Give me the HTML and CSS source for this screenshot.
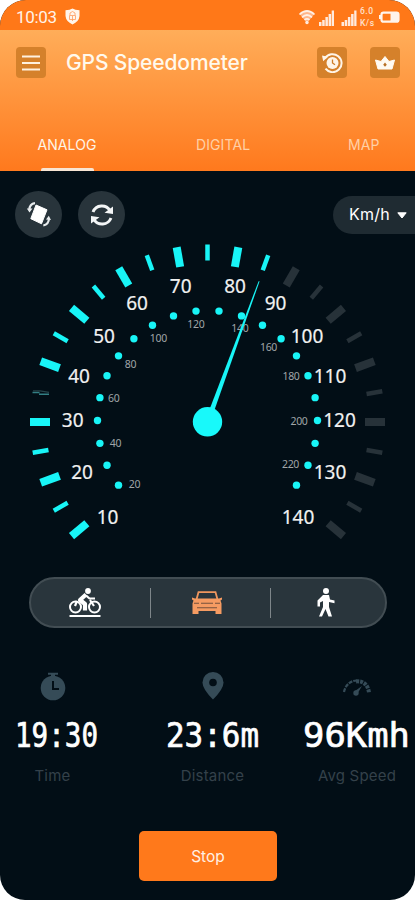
FILE: index.html
```html
<!DOCTYPE html>
<html lang="en">
<head>
<meta charset="utf-8">
<meta name="viewport" content="width=device-width, initial-scale=1">
<title>GPS Speedometer</title>
<link rel="stylesheet" href="styles.css">
</head>
<body>
<main class="phone">
  <div class="status">
    <span class="clock">10:03</span>
    <svg class="shield" width="15" height="17" viewBox="0 0 15 17"><path d="M.5 2.2Q5 2 7.500 .4Q10 2 14.500 2.200V8Q14 13.500 7.500 16.500Q1 13.500 .5 8Z" fill="#fff5eb"/><path d="M5 7V5q2.500-3 5 0v2M4.500 7.500h6v4h-6zM7.500 8v5" fill="none" stroke="#ff9a5c" stroke-width=".8"/></svg>
    <svg class="signals" width="104" height="24" viewBox="0 0 104 24">
      <path d="M2 9.500Q9 3 16 9.500L9 18z" fill="#ffb58a"/>
      <g fill="none" stroke="#fff0e6" stroke-width="1.700"><path d="M1.500 9.500Q9 2.500 16.500 9.500"/><path d="M4 12.300Q9 7.700 14 12.300"/><path d="M6.500 14.800Q9 12.800 11.500 14.800"/></g>
      <circle cx="9" cy="17.500" r="1.700" fill="#ffe9dc"/>
      <g fill="#ffeade"><path d="M21 17h2.500v4H21zM24.200 15h2.500v6h-2.500zM27.400 12h2.500v9h-2.500zM30.600 9h2.500v12h-2.500zM33.700 5.500h2.300V21h-2.300z"/><path d="M43.500 17H46v4h-2.500zM46.700 15h2.500v6h-2.500zM49.900 12h2.500v9h-2.500zM53.100 9h2.500v12h-2.500zM56.200 5.500h2.300V21h-2.300z"/></g>
      <text class="rate" x="62" y="9" textLength="13">6.0</text><text class="rate" x="62" y="20.500" textLength="14">K/s</text>
      <rect x="83.500" y="7.700" width="17" height="9" rx="2" fill="none" stroke="#fff4ec" stroke-width="2.200"/><path d="M92.500 8h8v8.500h-8zM81 10h2v4h-2z" fill="#fff4ec"/>
    </svg>
  </div>
  <header class="header">
    <div class="titlebar">
      <span class="square"><svg width="18" height="16" viewBox="0 0 18 16"><path d="M0 1.500h18M0 8h18M0 14.500h18" stroke="#fff1df" stroke-width="2.200"/></svg></span>
      <h1 class="title">GPS Speedometer</h1>
      <span class="square"><svg width="22" height="20" viewBox="0 0 22 20"><circle cx="11.500" cy="10" r="6" fill="#fff5e8"/><path d="M4 5.300A9 9 0 1 1 4.500 15.700" fill="none" stroke="#fff5e8" stroke-width="2"/><path d="M1 2.500l6 1.200-4.800 4.500z" fill="#fff5e8"/><path d="M11.500 6.500V10l2.500 1.700" fill="none" stroke="#cf7d26" stroke-width="1.300"/></svg></span>
      <span class="square crown"><svg width="20" height="14" viewBox="0 0 20 14"><path d="M.5 4L6 5.500 10 .5l4 5 5.500-1.500L17 13H3z" fill="#fffaf2" stroke="#fffaf2" stroke-linejoin="round"/><path d="M10 6.500l1.800 2.200-1.800 2.100-1.800-2.100z" fill="#b77025"/></svg></span>
    </div>
    <nav class="tabs">
      <span class="tab active">ANALOG</span><span class="tab digital">DIGITAL</span><span class="tab map">MAP</span>
    </nav>
  </header>
  <section class="tools">
    <span class="round"><svg width="26" height="27" viewBox="0 0 26 27"><path d="M10 4L21 8.800 15.500 22.800 4.800 17.700z" fill="#fff" stroke="#fff" stroke-linejoin="round"/><g fill="none" stroke="#e8ecee" stroke-width="2.200"><path d="M3.300 9Q3.500 3 9 2.200"/><path d="M23 17Q22.800 23.500 17.300 24.500"/></g><path d="M.8 7.500h5.700L3.500 11.500zM20 18.500l2.800-3.800 2.200 4.300z" fill="#e8ecee"/></svg></span>
    <span class="round"><svg width="26" height="24" viewBox="0 0 26 24"><g fill="none" stroke="#f3f5f6" stroke-width="2.900"><path d="M4 9C7 1.500 17 1 21 7.500"/><path d="M22 15C19 22.500 9 23 5 16.500"/></g><path d="M24 3.500V11l-8.500-1.300zM2 20.500V13l8.500 1.300z" fill="#f3f5f6"/></svg></span>
    <span class="unit"><span class="unit-name">Km/h</span><svg width="10" height="7" viewBox="0 0 10 7"><path d="M.8 .8h8.400L5 6z" fill="#fff" stroke="#fff" stroke-linejoin="round"/></svg></span>
  </section>
  <svg class="gauge" width="415" height="310" viewBox="0 240 415 310">
    <g id="ticks"></g>
    <path d="M32.500 392.500h7M39 394.200h10" stroke="#327f84" stroke-width="1.600"/><path d="M33 390.800h7l9 1.500" fill="none" stroke="#27444b" stroke-width="1.200"/>
    <path d="M335 311l5-4 1 4 3 1-5 3z" fill="#273239"/>
    <g id="dots" fill="#18f5f7"></g>
    <g class="minor-labels">
      <text x="134.500" y="487.500">20</text><text x="115.500" y="446.600">40</text><text x="113.800" y="402">60</text><text x="130.500" y="368">80</text><text x="158.300" y="342">100</text><text x="195.800" y="327.500">120</text><text x="239.800" y="332">140</text><text x="268.500" y="351">160</text><text x="291" y="379.500">180</text><text x="299" y="424.500">200</text><text x="290.500" y="467.500">220</text>
    </g>
    <g class="major-labels">
      <text x="107.500" y="524">10</text><text x="82" y="478.500">20</text><text x="72.700" y="427">30</text><text x="79" y="382.500">40</text><text x="104" y="342.500">50</text><text x="137" y="309.500">60</text><text x="180.700" y="292.500">70</text><text x="235" y="292.500">80</text><text x="275.500" y="309.500">90</text><text x="307" y="342.500">100</text><text x="330" y="382.500">110</text><text x="339.500" y="427">120</text><text x="330" y="478.500">130</text><text x="298" y="524">140</text>
    </g>
    <path d="M205 421.300L258.600 281.200h1L210 422.700z" fill="#18f5f7"/>
    <circle cx="207.500" cy="421.800" r="14.700" fill="#18f9fa"/>
  </svg>
  <section class="modes">
    <span class="mode bike"><svg width="32" height="30" viewBox="0 0 32 30"><g fill="none" stroke="#fff" stroke-width="2"><circle cx="6.500" cy="19" r="5.500"/><circle cx="25.500" cy="19" r="5.500"/><path d="M.5 28h31"/></g><circle cx="19" cy="3" r="2.900" fill="#fff"/><path d="M17 6.500l-6 5.500 5 4v6.500" fill="none" stroke="#fff" stroke-width="4.200" stroke-linejoin="round"/><path d="M17 7.500l3.500 3H26M8 13l-2 5M21 12l4 6" fill="none" stroke="#fff" stroke-width="2.200"/></svg></span>
    <span class="mode car"><svg width="30" height="24" viewBox="0 0 30 24"><path d="M4.500 8.500L6.500 1.200h17l2 7.300" fill="none" stroke="#ef965e" stroke-width="1.800"/><path d="M0 6.500l3 1h24l3-1v2l-1.500 1 1 3V23h-6v-3h-17v3h-6V12.500l1-3L0 8.500z" fill="#f59b62"/><path d="M2 12.200h5M23 12.200h5M9 12.200h12M5 16.800h20" stroke="#75523d" stroke-width="1.100"/></svg></span>
    <span class="mode walk"><svg width="20" height="30" viewBox="0 0 20 30"><circle cx="10" cy="3" r="3" fill="#fff"/><path d="M7 7h6l1 4.500 4.500 1v2.700L13 14v5l3 9.500h-3.500L9.500 21 6 28.500H3L7 19v-6l-3 1.500v4H1.500V12.500z" fill="#fff"/></svg></span>
  </section>
  <section class="stats">
    <div class="stat time">
      <svg class="stat-icon" width="28" height="30" viewBox="0 0 28 30"><circle cx="14" cy="17" r="12.300" fill="#354b57"/><path d="M9 1.800h10v2H9zM12 3h4v3h-4z" fill="#354b57"/><path d="M14 10v8h6" fill="none" stroke="#020e16" stroke-width="2"/></svg>
      <svg class="reading" width="84" height="44" viewBox="0 0 84 44"><text x="0" y="34" textLength="83" lengthAdjust="spacingAndGlyphs">19:30</text></svg>
      <span class="caption">Time</span>
    </div>
    <div class="stat distance">
      <svg class="stat-icon" width="22" height="30" viewBox="0 0 22 30"><path d="M11 28.500Q.5 18 .5 11.500a10.500 10.500 0 0 1 21 0Q21.500 18 11 28.500z" fill="#354b57"/><circle cx="11" cy="11.500" r="3.800" fill="#020e16"/></svg>
      <svg class="reading" width="94" height="44" viewBox="0 0 94 44"><text x="0" y="34" textLength="93" lengthAdjust="spacingAndGlyphs">23:6m</text></svg>
      <span class="caption">Distance</span>
    </div>
    <div class="stat speed">
      <svg class="stat-icon" width="30" height="30" viewBox="0 0 30 30"><path d="M2 21C3 15 8 9.500 15 9.500" fill="none" stroke="#354b57" stroke-width="2.200" stroke-dasharray="4 1"/><path d="M14 10.500c8-1 12 4 13 11" fill="none" stroke="#354b57" stroke-width="4" stroke-dasharray="3 1"/><path d="M13 20l7-5-4.500 7.500z" fill="#354b57"/><circle cx="14" cy="22" r="2.700" fill="#354b57"/></svg>
      <svg class="reading" width="108" height="44" viewBox="0 0 108 44"><text x="0" y="34" textLength="107" lengthAdjust="spacingAndGlyphs">96Kmh</text></svg>
      <span class="caption">Avg Speed</span>
    </div>
  </section>
  <button class="stop">Stop</button>
</main>
<script src="gauge.js"></script>
</body>
</html>
```
FILE: styles.css
```css
* { box-sizing: border-box; }
body { margin: 0; background: #fff; font-family: Inter, "Liberation Sans", sans-serif; }
svg { display: block; flex: none; }
.phone { width: 415px; height: 900px; background: #020e16; border-radius: 26px 26px 25px 25px; overflow: hidden; display: flex; flex-direction: column; }
.status { flex: none; height: 30px; padding: 0 13px 0 16px; background: #ff7818; display: flex; align-items: center; }
.clock { width: 42px; margin-right: 7px; padding-top: 3px; font: 17px Roboto, sans-serif; letter-spacing: -.3px; color: #fff3e8; }
.shield { margin-top: 3px; }
.signals { margin: 3px 0 0 auto; }
.rate { font: 500 8.500px Roboto, sans-serif; fill: #ffe1cd; }
.header { flex: none; height: 141px; padding: 17px 15px 0 16px; background: linear-gradient(#ffad59, #ff791d); display: flex; flex-direction: column; }
.titlebar { display: flex; align-items: center; }
.square { width: 30px; height: 31px; flex: none; border-radius: 4px; background: #d5812b; display: flex; align-items: center; justify-content: center; }
.crown { margin-left: 23px; }
.title { margin: 0 auto 0 20px; font-size: 21px; line-height: 31px; font-weight: 500; letter-spacing: -.13px; color: #fff9ed; white-space: nowrap; }
.tabs { margin-top: auto; height: 36px; padding-left: 21px; display: flex; }
.tab { font-size: 14px; line-height: 20px; color: #ffd0a6; letter-spacing: .1px; }
.active { width: 60px; color: #fff5e8; display: flex; flex-direction: column; align-items: center; }
.active::after { content: ""; width: 53px; height: 3px; margin-top: 13px; background: #f8e5d4; border-radius: 2px 2px 0 0; }
.digital { margin-left: 99px; width: 55px; }
.map { margin-left: 97px; }
.tools { flex: none; height: 69px; padding: 20px 0 0 15px; display: flex; gap: 16px; align-items: flex-start; }
.round { width: 47px; height: 47px; border-radius: 50%; background: #28343b; display: flex; align-items: center; justify-content: center; }
.unit { margin: 5px 0 0 auto; width: 82px; height: 38px; padding-left: 16px; border-radius: 19px 0 0 19px; background: #1f2b32; display: flex; align-items: center; gap: 7px; color: #fff; }
.unit-name { width: 41px; font-size: 16px; letter-spacing: .2px; line-height: 20px; margin-top: -2px; }
.gauge { flex: none; }
.cyan { stroke: #18f5f7; }
.gray { stroke: #273239; }
.minor-labels { font: 10.500px "Noto Sans", sans-serif; fill: #a0a5a8; text-anchor: middle; letter-spacing: -.3px; }
.major-labels { font: 19px "Noto Sans", sans-serif; fill: #f1f1f1; stroke: #f1f1f1; stroke-width: .2px; text-anchor: middle; }
.modes { flex: none; width: 358px; height: 51px; margin: 27px 0 0 29px; border: 2px solid #424d53; border-radius: 26px; background: #29353c; display: flex; align-items: center; }
.mode { height: 30px; display: flex; align-items: center; justify-content: center; }
.bike { width: 119px; padding-right: 12px; }
.car { width: 121px; padding-right: 8px; border: solid #7e868a; border-width: 0 1.500px; }
.walk { flex: 1; padding-right: 4px; }
.stats { flex: none; padding: 43px 4px 0 15px; display: flex; justify-content: space-between; }
.stat { display: flex; flex-direction: column; align-items: center; }
.reading { margin-top: 12px; overflow: visible; }
.reading text { font: 34px "DejaVu Sans Mono", monospace; fill: #fff; stroke: #fff; stroke-width: .7px; }
.caption { margin-top: 9px; font-size: 15px; line-height: 20px; color: #34414a; letter-spacing: .2px; }
.time { width: 84px; }
.time .stat-icon { margin-right: 9px; }
.time .caption { margin-right: 9px; }
.distance { margin-left: 23px; }
.stop { flex: none; width: 138px; height: 50px; margin: 45px 0 0 139px; padding: 0; border: 0; border-radius: 5px; background: #ff791b; color: #fff0e5; font: 15.500px Inter, sans-serif; }
```
FILE: gauge.js
```js
const NS = "http://www.w3.org/2000/svg";
const ticks = document.getElementById("ticks");
const dots = document.getElementById("dots");

function add(parent, name, attrs) {
  const el = document.createElementNS(NS, name);
  for (const key in attrs) el.setAttribute(key, attrs[key]);
  parent.appendChild(el);
}

// Outer scale: a wide tick every 20 degrees, a thin one between.
for (let a = 220; a >= -40; a -= 10) {
  if (a === 170) continue;
  const major = (a + 40) % 20 === 0;
  const c = Math.cos(a * Math.PI / 180), s = Math.sin(a * Math.PI / 180);
  const r1 = major ? 157.500 : 161.500;
  add(ticks, "line", {
    x1: 207.500 + r1 * c, y1: 422 - r1 * s,
    x2: 207.500 + 177.500 * c, y2: 422 - 177.500 * s,
    "stroke-width": major ? 8 : 4.500,
    class: a >= 70 ? "cyan" : "gray"
  });
}

// Inner scale.
for (let a = 216; a >= -36; a -= 12) {
  const rad = a * Math.PI / 180;
  add(dots, "circle", { cx: 207.500 + 110 * Math.cos(rad), cy: 420.500 - 110 * Math.sin(rad), r: 3.700 });
}
```
